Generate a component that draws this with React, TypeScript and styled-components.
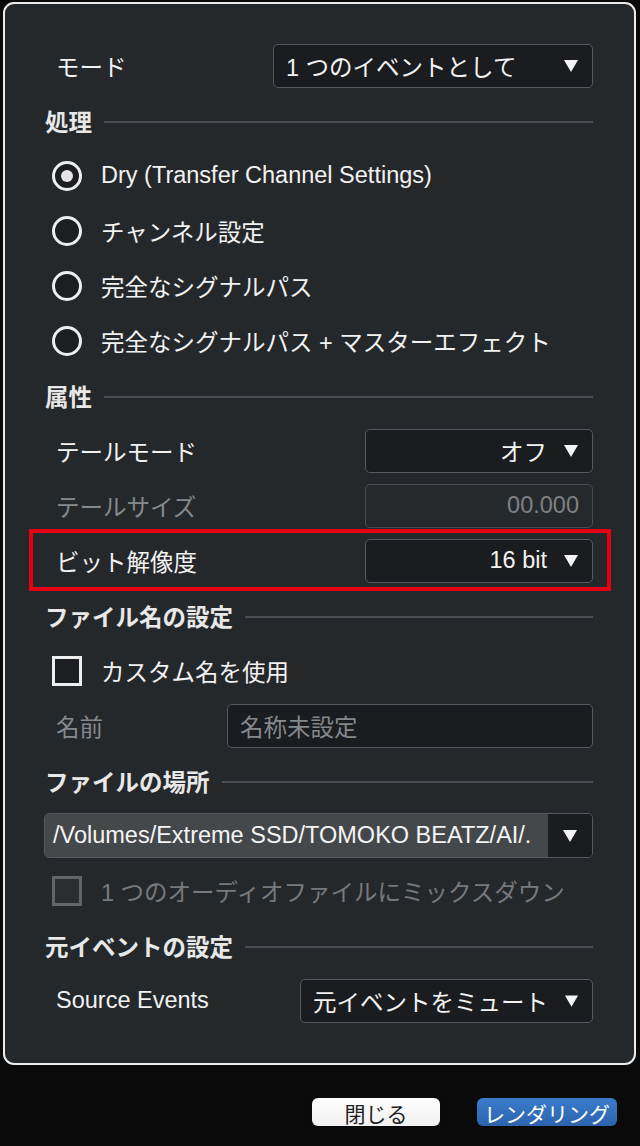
import React from "react";
import styled, { createGlobalStyle } from "styled-components";

const GlobalStyle = createGlobalStyle`
  html, body {
    margin: 0;
    padding: 0;
    background: #0a0a0a;
  }
  body {
    font-family: "Liberation Sans", "Noto Sans CJK JP", sans-serif;
    -webkit-font-smoothing: antialiased;
  }
`;

const Page = styled.div`
  width: 640px;
  height: 1146px;
  background: #0a0a0a;
  padding-top: 2px;
  box-sizing: border-box;
  display: flex;
  flex-direction: column;
`;

const Panel = styled.div`
  margin: 0 4px 0 3px;
  height: 1063px;
  box-sizing: border-box;
  border: 2px solid #ececec;
  border-radius: 11px;
  background: #25282b;
  padding: 34px 41px 0 40px;
  display: flex;
  flex-direction: column;
`;

const Row = styled.div<{ $indent?: number }>`
  position: relative;
  height: 55px;
  display: flex;
  align-items: center;
  padding-left: ${(p) => p.$indent ?? 0}px;
  color: #f2f2f2;
  font-size: 23.5px;
`;

const Label = styled.span<{ $dim?: boolean }>`
  flex: 1;
  padding-left: 11px;
  font-size: 23.5px;
  color: ${(p) => (p.$dim ? "#86898c" : "#f2f2f2")};
  white-space: nowrap;
`;

const Heading = styled.div`
  height: 55px;
  display: flex;
  align-items: center;
  gap: 12px;
  font-size: 23.5px;
  font-weight: 700;
  color: #e8e8e8;
  white-space: nowrap;
  &::after {
    content: "";
    flex: 1;
    height: 2px;
    margin-top: 2px;
    background: #4a4d51;
  }
`;

const Select = styled.div<{ $width: number; $align?: "left" | "right"; $disabled?: boolean }>`
  width: ${(p) => p.$width}px;
  height: 44px;
  box-sizing: border-box;
  display: flex;
  align-items: center;
  justify-content: ${(p) => (p.$align === "right" ? "flex-end" : "space-between")};
  gap: 16px;
  padding: 0 13px 0 12px;
  border: 1px solid ${(p) => (p.$disabled ? "#494c50" : "#56595d")};
  border-radius: 5px;
  background: ${(p) => (p.$disabled ? "#26292c" : "#1a1c1f")};
  color: ${(p) => (p.$disabled ? "#7e8184" : "#f2f2f2")};
  font-size: 23.5px;
  white-space: nowrap;
`;

const Placeholder = styled.span`
  color: #85888b;
`;

const Arrow = () => (
  <svg width="16" height="14" viewBox="0 0 16 14">
    <polygon points="1,1 15,1 8,13" fill="#f4f4f4" />
  </svg>
);

const Radio = styled.span<{ $on?: boolean }>`
  width: 30px;
  height: 30px;
  box-sizing: border-box;
  border: 3px solid #eeeeee;
  border-radius: 50%;
  background: #1c1e21;
  display: flex;
  align-items: center;
  justify-content: center;
  margin-right: 19px;
  flex-shrink: 0;
  &::after {
    content: "";
    display: ${(p) => (p.$on ? "block" : "none")};
    width: 12px;
    height: 12px;
    border-radius: 50%;
    background: #e4e4e4;
  }
`;

const Check = styled.span<{ $disabled?: boolean }>`
  width: 30px;
  height: 30px;
  box-sizing: border-box;
  border: 3px solid ${(p) => (p.$disabled ? "#626467" : "#eeeeee")};
  background: ${(p) => (p.$disabled ? "#2b2e31" : "#1c1e21")};
  margin-right: 19px;
  flex-shrink: 0;
`;

const OptionText = styled.span<{ $dim?: boolean }>`
  color: ${(p) => (p.$dim ? "#77797c" : "#f2f2f2")};
  white-space: nowrap;
`;

const Highlight = styled.div`
  position: absolute;
  top: -4px;
  bottom: -3px;
  left: -16px;
  right: -18px;
  border: 4px solid #e50012;
  pointer-events: none;
`;

const PathField = styled.div`
  flex: 1;
  height: 45px;
  box-sizing: border-box;
  display: flex;
  margin-left: -1px;
  border: 1px solid #56595d;
  border-radius: 5px;
  overflow: hidden;
`;

const PathText = styled.div`
  flex: 1;
  display: flex;
  align-items: center;
  padding-left: 8px;
  background: #45484b;
  color: #f4f4f4;
  font-size: 23.5px;
  white-space: nowrap;
  overflow: hidden;
`;

const ArrowCell = styled.div`
  width: 44px;
  display: flex;
  align-items: center;
  justify-content: center;
  background: #1a1c1f;
`;

const Footer = styled.div`
  flex: 1;
  display: flex;
  justify-content: flex-end;
  align-items: flex-start;
  gap: 37px;
  padding: 33px 23px 0 0;
`;

const Button = styled.button<{ $primary?: boolean }>`
  height: 28px;
  width: ${(p) => (p.$primary ? 140 : 128)}px;
  border: none;
  border-radius: 6px;
  font-family: inherit;
  font-size: 21px;
  padding: 0;
  color: ${(p) => (p.$primary ? "#ffffff" : "#1e1e1e")};
  background: ${(p) =>
    p.$primary ? "linear-gradient(#3a7ccb, #2b64ad)" : "linear-gradient(#ffffff, #f1f1f1)"};
  box-shadow: 0 1px 1px rgba(0, 0, 0, 0.5);
`;

export default function App() {
  return (
    <Page>
      <GlobalStyle />
      <Panel>
        <Row>
          <Label>モード</Label>
          <Select $width={320}>
            <span>1 つのイベントとして</span>
            <Arrow />
          </Select>
        </Row>

        <Heading>処理</Heading>
        <Row $indent={7}>
          <Radio $on />
          <OptionText>Dry (Transfer Channel Settings)</OptionText>
        </Row>
        <Row $indent={7}>
          <Radio />
          <OptionText>チャンネル設定</OptionText>
        </Row>
        <Row $indent={7}>
          <Radio />
          <OptionText>完全なシグナルパス</OptionText>
        </Row>
        <Row $indent={7}>
          <Radio />
          <OptionText>完全なシグナルパス + マスターエフェクト</OptionText>
        </Row>

        <Heading>属性</Heading>
        <Row>
          <Label>テールモード</Label>
          <Select $width={228} $align="right">
            <span>オフ</span>
            <Arrow />
          </Select>
        </Row>
        <Row>
          <Label $dim>テールサイズ</Label>
          <Select $width={228} $align="right" $disabled>
            <span>00.000</span>
          </Select>
        </Row>
        <Row>
          <Label>ビット解像度</Label>
          <Select $width={228} $align="right">
            <span>16 bit</span>
            <Arrow />
          </Select>
          <Highlight />
        </Row>

        <Heading>ファイル名の設定</Heading>
        <Row $indent={7}>
          <Check />
          <OptionText>カスタム名を使用</OptionText>
        </Row>
        <Row>
          <Label $dim>名前</Label>
          <Select $width={366}>
            <Placeholder>名称未設定</Placeholder>
          </Select>
        </Row>

        <Heading>ファイルの場所</Heading>
        <Row>
          <PathField>
            <PathText>/Volumes/Extreme SSD/TOMOKO BEATZ/AI/.</PathText>
            <ArrowCell>
              <Arrow />
            </ArrowCell>
          </PathField>
        </Row>
        <Row $indent={7}>
          <Check $disabled />
          <OptionText $dim>1 つのオーディオファイルにミックスダウン</OptionText>
        </Row>

        <Heading>元イベントの設定</Heading>
        <Row>
          <Label>Source Events</Label>
          <Select $width={293}>
            <span>元イベントをミュート</span>
            <Arrow />
          </Select>
        </Row>
      </Panel>
      <Footer>
        <Button>閉じる</Button>
        <Button $primary>レンダリング</Button>
      </Footer>
    </Page>
  );
}
